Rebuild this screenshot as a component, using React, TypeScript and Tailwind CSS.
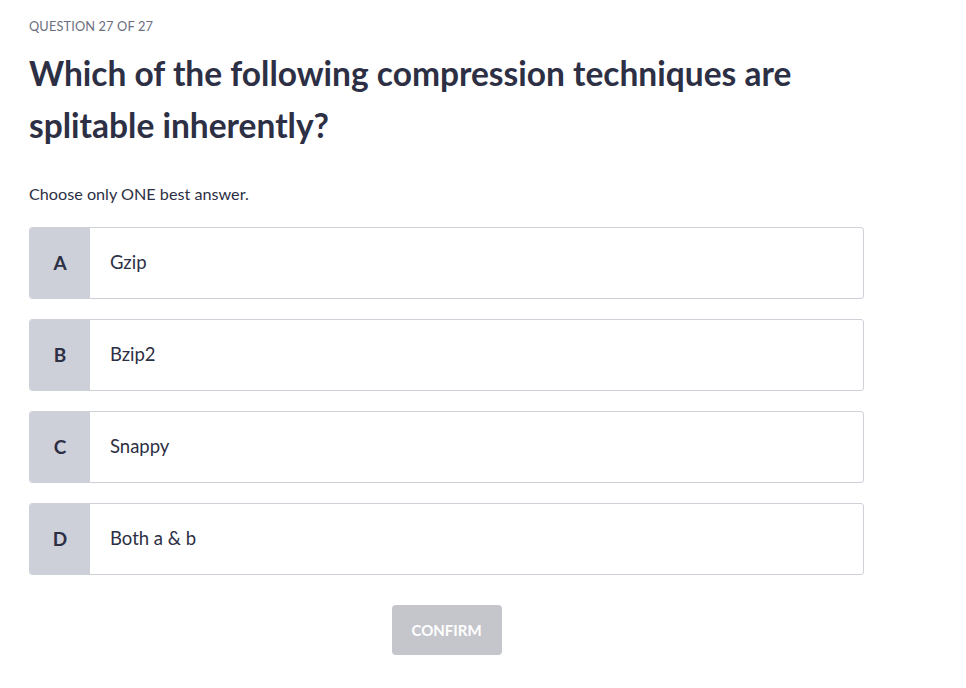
import React from "react";

const options = [
  { l: "A", t: "Gzip" },
  { l: "B", t: "Bzip2" },
  { l: "C", t: "Snappy" },
  { l: "D", t: "Both a & b" },
];

export default function App() {
  return (
    <div className="w-[966px] h-[688px] bg-white text-[#2d2f44]" style={{ fontFamily: "Lato, 'Noto Sans', sans-serif" }}>
      <div className="pl-[29px] w-[864px] pt-[17px]">
        <div className="text-[12.8px] leading-[18px] text-[#6b6e80] tracking-[0.01em]">QUESTION 27 OF 27</div>
        <h1 className="mt-[12px] text-[33.5px] leading-[52px] font-bold w-[820px]">
          Which of the following compression techniques are splitable inherently?
        </h1>
        <div className="mt-[33px] text-[16.2px] leading-[20px]">Choose only ONE best answer.</div>
        <div className="mt-[23px] flex flex-col gap-[20px]">
          {options.map((o) => (
            <div key={o.l} className="flex h-[72px] rounded-[3px] border border-[#cfd1d9] overflow-hidden">
              <div className="w-[60px] bg-[#cdd0d9] flex items-center justify-center text-[19px] font-bold">{o.l}</div>
              <div className="flex-1 flex items-center pl-[20px] text-[18.5px]">{o.t}</div>
            </div>
          ))}
        </div>
        <div className="mt-[30px] flex justify-center">
          <button className="w-[110px] h-[50px] rounded-[4px] bg-[#c5c6cc] text-white font-bold text-[15px]">CONFIRM</button>
        </div>
      </div>
    </div>
  );
}
